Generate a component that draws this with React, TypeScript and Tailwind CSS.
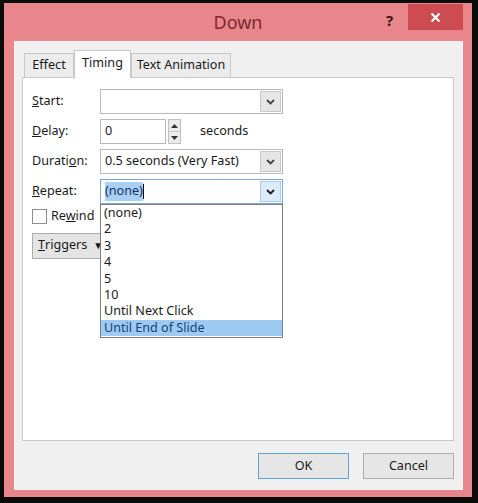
import React from 'react';

const font = { fontFamily: '"Noto Sans", "Open Sans", Arial, sans-serif' };

const Chevron: React.FC<{ dark?: boolean }> = ({ dark }) => (
  <svg width="9" height="6" viewBox="0 0 9 6">
    <path d="M1 1 L4.5 4.5 L8 1" fill="none" stroke={dark ? '#1a1a1a' : '#444'} strokeWidth="1.8" />
  </svg>
);

const Combo: React.FC<{ children?: React.ReactNode; focused?: boolean }> = ({ children, focused }) => (
  <div
    className={`flex h-[25px] w-[183px] items-stretch border bg-white ${
      focused ? 'border-[#7aa9d9]' : 'border-[#b9b9b9]'
    }`}
  >
    <div className="flex flex-1 items-center pl-[4px] text-[12.6px] text-[#1a1a1a]">{children}</div>
    <div
      className={`m-[1px] flex w-[21px] items-center justify-center border ${
        focused ? 'border-[#a9cdee] bg-[#dcecfb]' : 'border-[#c8c8c8] bg-[#e6e6e6]'
      }`}
    >
      <Chevron dark={focused} />
    </div>
  </div>
);

const Label: React.FC<{ pre: string; key1: string; post: string }> = ({ pre, key1, post }) => (
  <div className="w-[68px] text-[12.6px] text-[#1a1a1a]">
    {pre}
    <span className="underline">{key1}</span>
    {post}
  </div>
);

const options = ['(none)', '2', '3', '4', '5', '10', 'Until Next Click', 'Until End of Slide'];

export default function App() {
  return (
    <div className="h-[503px] w-[478px] bg-[#0b0b0b] pl-[4px] pt-[3px]" style={font}>
      <div className="flex h-[494px] w-[468px] flex-col bg-[#e8868b]">
        {/* title bar */}
        <div className="relative flex h-[38px] items-center justify-center">
          <span className="text-[18px] text-[#7b2a2f]">Down</span>
          <span className="absolute left-[382px] top-[6px] text-[15px] font-bold text-[#3b1416]">?</span>
          <div className="absolute right-[9px] top-[1px] flex h-[26px] w-[55px] items-center justify-center bg-[#cc4c51]">
            <svg width="11" height="11" viewBox="0 0 11 11">
              <path d="M1.5 1.5 L9.5 9.5 M9.5 1.5 L1.5 9.5" stroke="#fff" strokeWidth="2.2" />
            </svg>
          </div>
        </div>

        {/* client area */}
        <div className="ml-[10px] flex h-[449px] w-[449px] flex-col border border-[#f7f7f7] bg-[#f0f0f0] pl-[7px] pt-[8px]">
          {/* tabs */}
          <div className="flex items-end text-[12.6px] text-[#1a1a1a]">
            <div className="ml-[2px] flex h-[24px] w-[50px] items-center justify-center border border-b-0 border-[#c9c9c9] bg-[#ececec]">
              Effect
            </div>
            <div className="relative z-10 -mb-px flex h-[28px] w-[57px] items-start justify-center border border-b-0 border-[#c9c9c9] bg-white pt-[3px]">
              Timing
            </div>
            <div className="flex h-[24px] w-[100px] items-center justify-center border border-b-0 border-[#c9c9c9] bg-[#ececec]">
              Text Animation
            </div>
          </div>

          {/* tab page */}
          <div className="relative h-[364px] w-[432px] border border-[#c9c9c9] bg-white pl-[9px] pt-[11px]">
            <div className="flex flex-col gap-[5px]">
              <div className="flex items-center">
                <Label pre="" key1="S" post="tart:" />
                <Combo />
              </div>
              <div className="flex items-center">
                <Label pre="" key1="D" post="elay:" />
                <div className="flex h-[25px] w-[66px] items-center border border-[#b9b9b9] bg-white">
                  <span className="flex-1 pl-[4px] text-[12.6px] text-[#1a1a1a]">0</span>
                </div>
                <div className="ml-[2px] flex h-[25px] w-[13px] flex-col border border-[#c0c0c0]">
                  <div className="flex flex-1 items-center justify-center border-b border-[#c8c8c8] bg-[#ececec]">
                    <svg width="7" height="4" viewBox="0 0 7 4">
                      <path d="M0 4 L3.5 0 L7 4 Z" fill="#333" />
                    </svg>
                  </div>
                  <div className="flex flex-1 items-center justify-center bg-[#ececec]">
                    <svg width="7" height="4" viewBox="0 0 7 4">
                      <path d="M0 0 L3.5 4 L7 0 Z" fill="#333" />
                    </svg>
                  </div>
                </div>
                <span className="ml-[19px] text-[12.6px] text-[#1a1a1a]">seconds</span>
              </div>
              <div className="flex items-center">
                <Label pre="Durati" key1="o" post="n:" />
                <Combo>0.5 seconds (Very Fast)</Combo>
              </div>
              <div className="flex items-center">
                <Label pre="" key1="R" post="epeat:" />
                <Combo focused>
                  <span className="bg-[#a9cff2] text-[#12306a]">(none)</span>
                  <span className="h-[15px] w-[1px] bg-black" />
                </Combo>
              </div>
            </div>

            <div className="mt-[3px] flex items-center">
              <div className="h-[15px] w-[15px] border border-[#8f8f8f] bg-white" />
              <span className="ml-[4px] text-[12.6px] text-[#1a1a1a]">
                Re<span className="underline">w</span>ind
              </span>
            </div>

            <div className="mt-[7px] flex h-[26px] w-[90px] items-center border border-[#adadad] bg-[#e4e4e4] pl-[5px] text-[12.6px] text-[#1a1a1a]">
              <span className="underline">T</span>riggers
              <span className="ml-[6px] text-[10px]">▼</span>
            </div>

            {/* open dropdown list */}
            <div className="absolute left-[77px] top-[126px] flex w-[183px] flex-col border border-[#7f7f7f] bg-white pb-[1px]">
              {options.map((o, i) => (
                <div
                  key={o}
                  className={`h-[16.4px] pl-[3px] text-[12.6px] leading-[16.4px] ${
                    i === options.length - 1 ? 'bg-[#9ccaf0] text-[#17407e]' : 'text-[#1a1a1a]'
                  }`}
                >
                  {o}
                </div>
              ))}
            </div>
          </div>

          {/* buttons */}
          <div className="mt-[12px] flex justify-end gap-[14px] pr-[8px]">
            <div className="flex h-[26px] w-[91px] items-center justify-center border border-[#5fa2dc] bg-[#e6e6e6] text-[12.6px] text-[#1a1a1a]">
              OK
            </div>
            <div className="flex h-[26px] w-[91px] items-center justify-center border border-[#adadad] bg-[#e6e6e6] text-[12.6px] text-[#1a1a1a]">
              Cancel
            </div>
          </div>
        </div>
      </div>
    </div>
  );
}
